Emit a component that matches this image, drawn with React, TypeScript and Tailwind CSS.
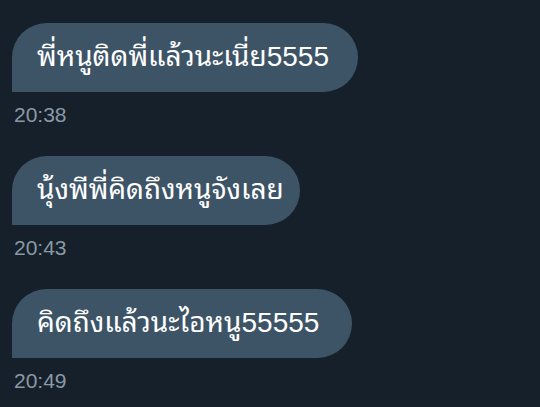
import React from "react";

const msgs = [
  { text: "พี่หนูติดพี่แล้วนะเนี่ย5555", time: "20:38", w: "w-[346px]" },
  { text: "นุ้งพีพี่คิดถึงหนูจังเลย", time: "20:43", w: "w-[288px]" },
  { text: "คิดถึงแล้วนะไอหนู55555", time: "20:49", w: "w-[340px]" },
];

export default function App() {
  return (
    <div
      className="w-[540px] h-[407px] overflow-hidden bg-[#15202b] pt-[23px] pl-[12px] flex flex-col"
      style={{ fontFamily: '"Liberation Sans", "Noto Sans Thai Looped", "Noto Sans Thai", "Noto Sans", sans-serif' }}
    >
      {msgs.map((m, i) => (
        <div key={i} className={`flex flex-col items-start ${i > 0 ? "mt-[29px]" : ""}`}>
          <div
            className={`${m.w} h-[69px] flex items-center px-[25px] pb-[2px] bg-[#3d5466] rounded-[35px] rounded-bl-none text-white text-[28px] leading-none whitespace-nowrap`}
          >
            {m.text}
          </div>
          <div className="mt-[11px] pl-[2px] h-[24px] leading-[24px] text-[21px] text-[#8b98a5]">{m.time}</div>
        </div>
      ))}
    </div>
  );
}
